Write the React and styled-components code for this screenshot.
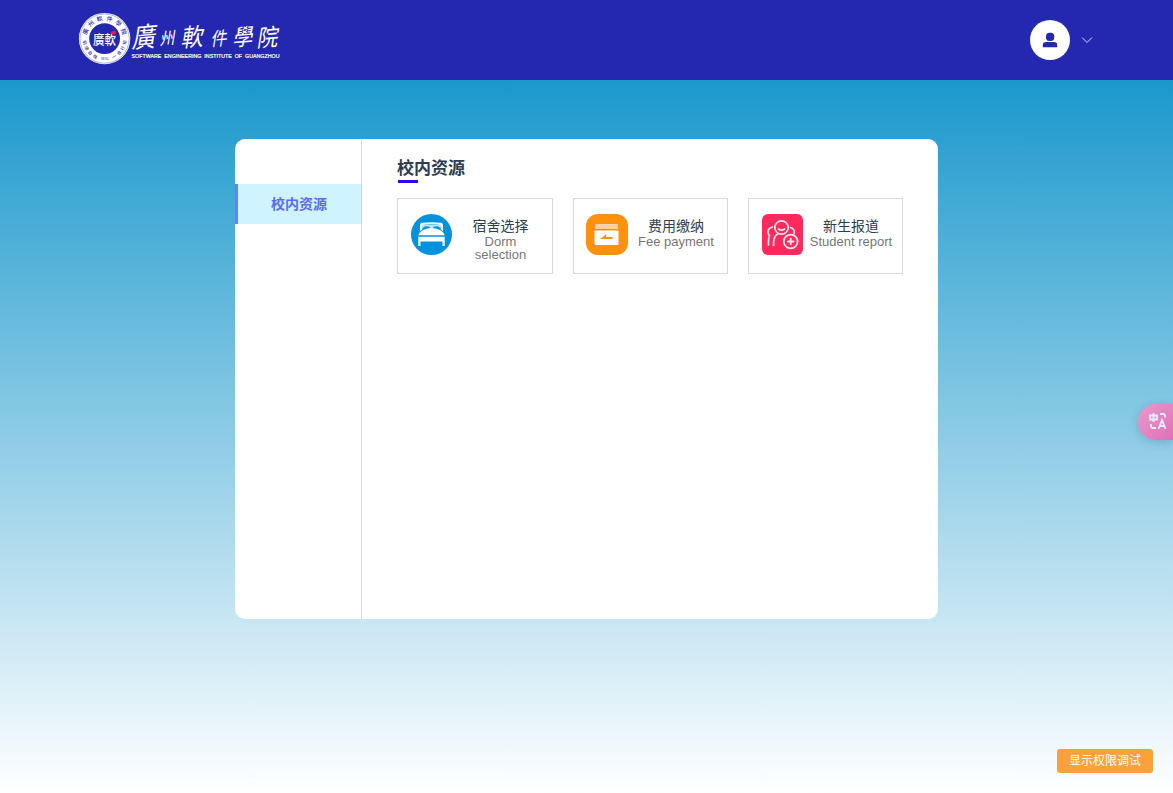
import React from 'react';
import styled, { createGlobalStyle } from 'styled-components';

const GlobalStyle = createGlobalStyle`
  * { box-sizing: border-box; }
  body {
    margin: 0;
    overflow: hidden;
    font-family: "Liberation Sans", "Noto Sans CJK SC", sans-serif;
    color: #2c3e50;
  }
`;

const Page = styled.div`
  height: 793px;
  background: linear-gradient(#1b98cc, #fff) 0 80px / 100% 713px no-repeat;
`;

const Header = styled.header`
  display: flex;
  justify-content: space-between;
  align-items: center;
  height: 80px;
  padding: 0 80px 0 78px;
  background: #2427b0;
`;

const Logo = styled.svg`
  display: block;
  width: 206px;
  height: 56px;
  margin-bottom: 4px;
  overflow: visible;
`;

const UserMenu = styled.div`
  display: flex;
  align-items: center;
  gap: 11px;
`;

const Avatar = styled.div`
  display: grid;
  place-items: center;
  width: 40px;
  height: 40px;
  border-radius: 50%;
  background: #fff;
`;

const Icon = styled.svg`
  display: block;
  flex: none;
  width: ${(p) => p.$size}px;
  height: ${(p) => p.$size}px;
`;

const Panel = styled.main`
  display: flex;
  width: 703px;
  height: 480px;
  margin: 59px 0 0 235px;
  border-radius: 10px;
  background: #fff;
  overflow: hidden;
`;

const Sidebar = styled.nav`
  width: 127px;
  padding-top: 45px;
  border-right: 1px solid #d9d9d9;
`;

const SidebarItem = styled.div`
  height: 40px;
  padding-right: 1px;
  border-left: 3px solid #6680ff;
  background: #d0f4ff;
  color: #5c6cfa;
  font-size: 14px;
  font-weight: 700;
  line-height: 40px;
  text-align: center;
`;

const Content = styled.section`
  flex: 1;
  padding: 16px 35px 0;
`;

const Title = styled.h2`
  height: 28px;
  margin: 0 0 15px;
  padding-top: 3px;
  font-size: 17px;
  line-height: 22px;

  &::after {
    content: "";
    display: block;
    width: 20px;
    height: 3px;
    margin-left: 1px;
    background: #3300ff;
  }
`;

const CardGrid = styled.div`
  display: grid;
  grid-template-columns: 156px 155px 155px;
  gap: 20px;
`;

const Card = styled.div`
  display: flex;
  height: 76px;
  padding: 15px 9px 0 ${(p) => p.$inset}px;
  border: 1px solid #d9d9d9;
`;

const CardText = styled.div`
  flex: 1;
  padding-top: 4px;
  margin-left: ${(p) => p.$gap}px;
  text-align: center;
`;

const CardName = styled.div`
  font-size: 14px;
  line-height: 17px;
`;

const CardSub = styled.div`
  color: #777;
  font-size: 13px;
  line-height: 13px;
`;

const TranslateTab = styled.div`
  position: fixed;
  top: 404px;
  right: 0;
  display: flex;
  align-items: center;
  width: 35px;
  height: 36px;
  padding: 0 0 2px 11px;
  border-radius: 18px 0 0 18px;
  background: linear-gradient(135deg, #e89acb, #e070b8);
  box-shadow: 0 2px 10px rgba(0, 60, 100, 0.2);
`;

const DebugButton = styled.button`
  position: fixed;
  right: 20px;
  bottom: 20px;
  width: 96px;
  height: 24px;
  padding: 0;
  border: 0;
  border-radius: 3px;
  background: #faa03c;
  color: #fff;
  font: 12px/24px "Liberation Sans", "Noto Sans CJK SC", sans-serif;
`;

const cjk = '"Noto Sans CJK TC", sans-serif';

const calligraphy = [
  { char: '廣', x: 54, y: 35, size: 28, stretch: 0.83 },
  { char: '州', x: 82, y: 32, size: 17, stretch: 0.88 },
  { char: '軟', x: 103, y: 34, size: 25, stretch: 0.88 },
  { char: '件', x: 133, y: 33, size: 19, stretch: 0.83 },
  { char: '學', x: 155, y: 33, size: 23, stretch: 0.86 },
  { char: '院', x: 179, y: 34, size: 24, stretch: 0.86 },
];

const sealRing = [
  ...[...'廣州軟件學院'].map((char, i) => ({ char, angle: -70 + i * 28, size: 5.8 })),
  ...[...'明德自強'].map((char, i) => ({ char, angle: -101 - i * 17, size: 4.2 })),
  ...[...'知行合一'].map((char, i) => ({ char, angle: 101 + i * 17, size: 4.2 })),
];

function SealChar({ char, angle, size }) {
  const upper = Math.abs(angle) < 90;
  const radians = (angle * Math.PI) / 180;
  const x = 26.6 + 20.4 * Math.sin(radians);
  const y = 28.6 - 20.4 * Math.cos(radians);
  return (
    <text
      fontSize={size}
      fontWeight="500"
      textAnchor="middle"
      y={size * 0.37}
      transform={`translate(${x} ${y}) rotate(${upper ? angle : angle + 180})`}
    >
      {char}
    </text>
  );
}

function SchoolLogo() {
  return (
    <Logo viewBox="0 0 206 56">
      <circle cx="26.6" cy="28.6" r="25.7" fill="#fff" />
      <circle cx="26.6" cy="28.6" r="24.6" fill="none" stroke="#2427b0" strokeWidth=".35" />
      <circle cx="26.6" cy="28.6" r="15.4" fill="#2427b0" />
      <g fill="#2427b0" fontFamily={cjk}>
        {sealRing.map((item) => <SealChar key={item.angle} {...item} />)}
        <text x="26.6" y="50" fontSize="3.6" textAnchor="middle">SEIG</text>
      </g>
      <text x="15" y="33.5" fontSize="13" fontWeight="500" fill="#fff" fontFamily={cjk} textLength="23" lengthAdjust="spacingAndGlyphs">廣軟</text>
      <path d="M32.500 22.500c1.500-2 3-1 4-2l2 1.500-1.500 2.500-3 .5z" fill="#ef1746" />
      <g fill="#fff" fontFamily={cjk} fontWeight="400">
        {calligraphy.map(({ char, x, y, size, stretch }) => (
          <text key={char} fontSize={size} transform={`translate(${x} ${y}) skewX(-14) rotate(-5) scale(${stretch} 1)`} y="3">{char}</text>
        ))}
      </g>
      <text x="53.500" y="47.500" fill="#fff" stroke="#fff" strokeWidth=".2" fontSize="5.300" wordSpacing="1.500" fontFamily="Liberation Sans, sans-serif" textLength="148" lengthAdjust="spacingAndGlyphs">SOFTWARE ENGINEERING INSTITUTE OF GUANGZHOU</text>
    </Logo>
  );
}

const DormIcon = () => (
  <Icon $size={41} viewBox="0 0 41 41">
    <circle cx="20.500" cy="20.500" r="20.500" fill="#0092df" />
    <path d="M9 17v-6q0-2 2-2.300 9.500-1 19 0 2 .3 2 2.300v6l-2.400-1.500v-3.300q0-1.400-1.500-1.500-7.600-.8-15.200 0-1.500.1-1.500 1.500v3.300z" fill="#fff" />
    <path d="M11.400 10.800h18.200v5H11.400z" fill="#bfe4f7" />
    <path d="M11 15.800q1-3.600 4.500-3.600 3.200 0 4.300 2.200h1.400q1.100-2.200 4.300-2.200 3.500 0 4.500 3.600z" fill="#0092df" />
    <path d="M7.300 21.300q1-3.500 5-5.300 3.500-2 8.200-2t8.200 2q4 1.800 5 5.300z" fill="#fff" />
    <path d="M7.300 22.800h26.400V32h-2.200v-4.500h-22V32H7.300z" fill="#fff" />
  </Icon>
);

const FeeIcon = () => (
  <Icon $size={42} viewBox="0 0 42 42">
    <rect width="42" height="41" rx="12" fill="#ff910b" />
    <rect x="9" y="10" width="23" height="5" rx="1" fill="#ffd49c" />
    <path d="M8.500 16.500h24V30q0 1-1 1h-22q-1 0-1-1z" fill="#fff" />
    <path d="M14 25l6.200-4.800V23h6.300v2z" fill="#ff910b" />
  </Icon>
);

const ReportIcon = () => (
  <Icon $size={41} viewBox="0 0 41 41">
    <rect width="41" height="41" rx="6" fill="#ff295c" />
    <g fill="none" stroke="#ffe5ec" strokeWidth="1.700" strokeLinecap="round">
      <circle cx="19.500" cy="13.500" r="6.700" />
      <path d="M16.500 15q3 2.400 6 0M10.500 13C6 14 4.500 18.500 7.500 21.500 6.300 24 6.300 27 6.500 31M15.500 20c-4 2.500-4.200 6.500-4 11.500M28.500 13.500c3 .7 4.500 3.500 3.500 6" />
      <circle cx="28.700" cy="27.500" r="6.900" strokeWidth="1.800" />
      <path d="M28.700 24.700v5.600M25.900 27.500h5.600" strokeWidth="1.900" />
    </g>
  </Icon>
);

const resources = [
  { name: '宿舍选择', sub: 'Dorm selection', icon: DormIcon, inset: 13, gap: 6 },
  { name: '费用缴纳', sub: 'Fee payment', icon: FeeIcon, inset: 12, gap: 6 },
  { name: '新生报道', sub: 'Student report', icon: ReportIcon, inset: 13, gap: 6 },
];

export default function App() {
  return (
    <Page>
      <GlobalStyle />
      <Header>
        <SchoolLogo />
        <UserMenu>
          <Avatar>
            <Icon $size={16} viewBox="0 0 16 16">
              <g fill="#2427b0">
                <rect x="4" y=".7" width="8.200" height="8.200" rx="3.500" />
                <path d="M.8 15.300v-2Q.8 10 4.300 10h7.400q3.500 0 3.500 3.300v2z" />
              </g>
            </Icon>
          </Avatar>
          <Icon $size={12} viewBox="0 0 12 12">
            <path d="M1 3.500l5 5 5-5" fill="none" stroke="#d5d6f2" strokeWidth="1" />
          </Icon>
        </UserMenu>
      </Header>
      <Panel>
        <Sidebar>
          <SidebarItem>校内资源</SidebarItem>
        </Sidebar>
        <Content>
          <Title>校内资源</Title>
          <CardGrid>
            {resources.map(({ name, sub, icon: Picture, inset, gap }) => (
              <Card key={name} $inset={inset}>
                <Picture />
                <CardText $gap={gap}>
                  <CardName>{name}</CardName>
                  <CardSub>{sub}</CardSub>
                </CardText>
              </Card>
            ))}
          </CardGrid>
        </Content>
      </Panel>
      <TranslateTab>
        <Icon $size={18} viewBox="0 0 18 18">
          <path d="M1 3.500h7v4H1zM4.500 1v9M11 2h3q2 0 2 2v1.500M2 12v2q0 2 2 2h3M9.500 17l3.500-9 3.500 9M11 14h4" fill="none" stroke="#e2efff" strokeWidth="1.800" />
        </Icon>
      </TranslateTab>
      <DebugButton>显示权限调试</DebugButton>
    </Page>
  );
}
